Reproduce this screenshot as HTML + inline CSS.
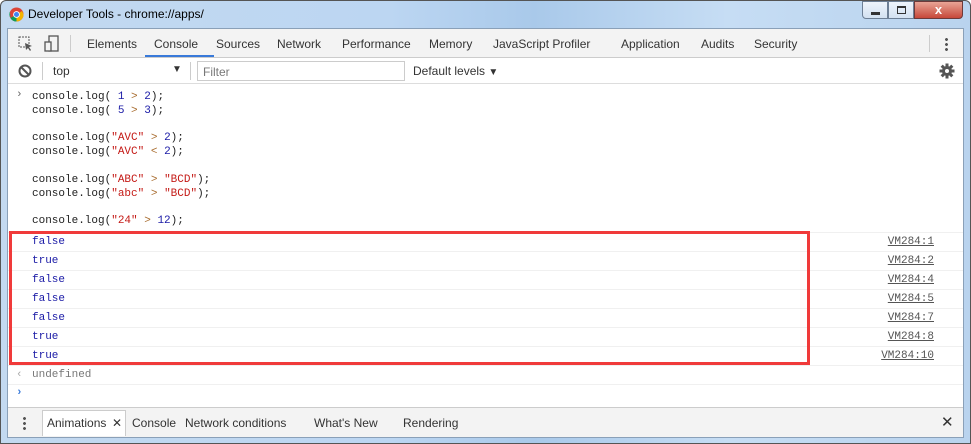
<!DOCTYPE html>
<html><head><style>
*{margin:0;padding:0;box-sizing:border-box}
body{width:971px;height:444px;overflow:hidden;background:#fff;font-family:"Liberation Sans",sans-serif;position:relative}
.frame{position:absolute;inset:0;background:linear-gradient(90deg,#c3d9f0,#bcd6f2 40%,#a9c9ea 55%,#c6ddf4 75%,#b9d3ee);border:1px solid #555;border-radius:6px 6px 0 0}
.title{position:absolute;left:28px;top:7px;font-size:12px;color:#000}
.inner{position:absolute;left:7px;top:28px;width:957px;height:410px;background:#fff;border:1px solid #8aa0b8}
.tabs{position:absolute;left:0;top:0;right:0;height:29px;background:#f3f3f3;border-bottom:1px solid #ccc;font-size:12px;color:#333}
.tabs span{position:absolute;top:8px}
.bar2{position:absolute;left:0;top:29px;right:0;height:26px;background:#fff;border-bottom:1px solid #ddd;font-size:12px;color:#333}
.mono{font-family:"Liberation Mono",monospace;font-size:11px;position:absolute;white-space:pre;color:#222}
.n{color:#1a1aa6}.s{color:#c41a16}.o{color:#a86c2e}
.row{position:absolute;left:0;right:0;height:19px;border-top:1px solid #f0f0f0}
.vm{position:absolute;right:29px;color:#555;text-decoration:underline;font-family:"Liberation Mono",monospace;font-size:11px;top:3px}
.red{position:absolute;left:1px;top:202px;width:801px;height:134px;border:3px solid #f03a3a}
.bottom{position:absolute;left:0;bottom:0;right:0;height:30px;background:#f3f3f3;border-top:1px solid #ccc;font-size:12px;color:#333}
.bottom span{position:absolute;top:8px}
</style></head><body>
<div class="frame"></div>
<svg style="position:absolute;left:9px;top:7px" width="15" height="15" viewBox="0 0 16 16"><circle cx="8" cy="8" r="7.5" fill="#db4437"/><path d="M8 8 L1.5 11.7 A7.5 7.5 0 0 0 8 15.5Z" fill="#0f9d58"/><path d="M8 8 L8 15.5 A7.5 7.5 0 0 0 15.5 8 L14 4.2Z" fill="#f4b400"/><path d="M1.5 11.7 A7.5 7.5 0 0 1 1 5Z" fill="#0f9d58"/><circle cx="8" cy="8" r="3.6" fill="#fff"/><circle cx="8" cy="8" r="2.7" fill="#4285f4"/></svg>
<div class="title">Developer Tools - chrome://apps/</div>
<div style="position:absolute;left:862px;top:1px;width:26px;height:18px;border:1px solid #6d7f95;border-radius:0 0 0 4px;background:linear-gradient(#eef4fb,#d3e1f1)"><div style="position:absolute;left:8px;top:10px;width:9px;height:3px;background:#333"></div></div>
<div style="position:absolute;left:888px;top:1px;width:26px;height:18px;border:1px solid #6d7f95;background:linear-gradient(#eef4fb,#d3e1f1)"><div style="position:absolute;left:8px;top:4px;width:9px;height:8px;border:1px solid #333;border-top-width:2px"></div></div>
<div style="position:absolute;left:914px;top:1px;width:49px;height:18px;border:1px solid #6d3a3a;border-radius:0 0 4px 0;background:linear-gradient(#e8a596,#c7483a);color:#fff;font-weight:bold;font-size:13px;text-align:center;line-height:16px">x</div>
<div class="inner">
 <div class="tabs">
  <svg style="position:absolute;left:10px;top:7px" width="16" height="16"><rect x="1" y="1" width="10" height="10" fill="none" stroke="#555" stroke-dasharray="2 1"/><path d="M7 7 L14 10 L11 11 L13 14 L12 15 L10 12 L8 14Z" fill="#555"/></svg>
  <svg style="position:absolute;left:36px;top:6px" width="16" height="17"><rect x="5" y="1" width="9" height="15" fill="none" stroke="#555" stroke-width="1.3"/><rect x="1" y="7" width="6" height="9" fill="#f3f3f3" stroke="#555" stroke-width="1.3"/></svg>
  <div style="position:absolute;left:62px;top:6px;width:1px;height:17px;background:#ccc"></div>
  <span style="left:79px">Elements</span><span style="left:146px;color:#333">Console</span>
  <div style="position:absolute;left:137px;top:26px;width:69px;height:2px;background:#3879d9"></div>
  <span style="left:208px">Sources</span><span style="left:269px">Network</span><span style="left:334px">Performance</span><span style="left:421px">Memory</span><span style="left:485px">JavaScript Profiler</span><span style="left:613px">Application</span><span style="left:693px">Audits</span><span style="left:746px">Security</span>
  <div style="position:absolute;left:921px;top:6px;width:1px;height:17px;background:#ccc"></div>
  <div style="position:absolute;left:937px;top:8px;width:3px;height:14px;background:radial-gradient(circle,#555 1.3px,transparent 1.6px) 0 0/3px 5px"></div>
 </div>
 <div class="bar2">
  <svg style="position:absolute;left:10px;top:6px" width="14" height="14"><circle cx="7" cy="7" r="5.5" fill="none" stroke="#555" stroke-width="2"/><path d="M3 3 L11 11" stroke="#555" stroke-width="2"/></svg>
  <div style="position:absolute;left:34px;top:4px;width:1px;height:18px;background:#ccc"></div>
  <span style="position:absolute;left:45px;top:6px">top</span>
  <span style="position:absolute;left:164px;top:6px;font-size:10px">▼</span>
  <div style="position:absolute;left:182px;top:4px;width:1px;height:18px;background:#ccc"></div>
  <div style="position:absolute;left:189px;top:3px;width:208px;height:20px;border:1px solid #ccc"><span style="position:absolute;left:5px;top:3px;color:#777">Filter</span></div>
  <span style="position:absolute;left:405px;top:6px">Default levels <span style="font-size:10px">▼</span></span>
  <svg style="position:absolute;left:931px;top:5px" width="16" height="16" viewBox="0 0 16 16"><g fill="#555"><circle cx="8" cy="8" r="5"/><rect x="6.5" y="0.5" width="3" height="15"/><rect x="0.5" y="6.5" width="15" height="3"/><rect x="6.5" y="0.5" width="3" height="15" transform="rotate(45 8 8)"/><rect x="6.5" y="0.5" width="3" height="15" transform="rotate(-45 8 8)"/></g><circle cx="8" cy="8" r="2" fill="#fff"/></svg>
 </div>
 <div class="mono" style="left:8px;top:60px;color:#666">›</div>
 <div class="mono" style="left:24px;top:61px;line-height:14px">console.log( <span class="n">1</span> <span class="o">&gt;</span> <span class="n">2</span>);
console.log( <span class="n">5</span> <span class="o">&gt;</span> <span class="n">3</span>);</div>
 <div class="mono" style="left:24px;top:102px;line-height:14px">console.log(<span class="s">"AVC"</span> <span class="o">&gt;</span> <span class="n">2</span>);
console.log(<span class="s">"AVC"</span> <span class="o">&lt;</span> <span class="n">2</span>);</div>
 <div class="mono" style="left:24px;top:144px;line-height:14px">console.log(<span class="s">"ABC"</span> <span class="o">&gt;</span> <span class="s">"BCD"</span>);
console.log(<span class="s">"abc"</span> <span class="o">&gt;</span> <span class="s">"BCD"</span>);</div>
 <div class="mono" style="left:24px;top:186px">console.log(<span class="s">"24"</span> <span class="o">&gt;</span> <span class="n">12</span>);</div>
 <div class="row" style="top:203px"><span class="mono n" style="left:24px;top:3px">false</span><span class="vm">VM284:1</span></div>
 <div class="row" style="top:222px"><span class="mono n" style="left:24px;top:3px">true</span><span class="vm">VM284:2</span></div>
 <div class="row" style="top:241px"><span class="mono n" style="left:24px;top:3px">false</span><span class="vm">VM284:4</span></div>
 <div class="row" style="top:260px"><span class="mono n" style="left:24px;top:3px">false</span><span class="vm">VM284:5</span></div>
 <div class="row" style="top:279px"><span class="mono n" style="left:24px;top:3px">false</span><span class="vm">VM284:7</span></div>
 <div class="row" style="top:298px"><span class="mono n" style="left:24px;top:3px">true</span><span class="vm">VM284:8</span></div>
 <div class="row" style="top:317px"><span class="mono n" style="left:24px;top:3px">true</span><span class="vm">VM284:10</span></div>
 <div class="row" style="top:336px"><span class="mono" style="left:8px;top:3px;color:#aaa">‹</span><span class="mono" style="left:24px;top:3px;color:#777">undefined</span></div>
 <div class="row" style="top:355px"><span class="mono" style="left:8px;top:2px;color:#3879d9;font-weight:bold">›</span></div>
 <div class="red"></div>
 <div class="bottom">
  <div style="position:absolute;left:15px;top:8px;width:3px;height:14px;background:radial-gradient(circle,#555 1.3px,transparent 1.6px) 0 0/3px 5px"></div>
  <div style="position:absolute;left:34px;top:2px;width:84px;height:26px;background:#fff;border:1px solid #ccc;border-bottom:none"></div>
  <span style="left:39px">Animations</span><span style="left:104px">✕</span><span style="left:124px">Console</span><span style="left:177px">Network conditions</span><span style="left:306px">What's New</span><span style="left:395px">Rendering</span>
  <span style="left:933px;font-size:15px;top:5px">✕</span>
 </div>
</div>
</body></html>
